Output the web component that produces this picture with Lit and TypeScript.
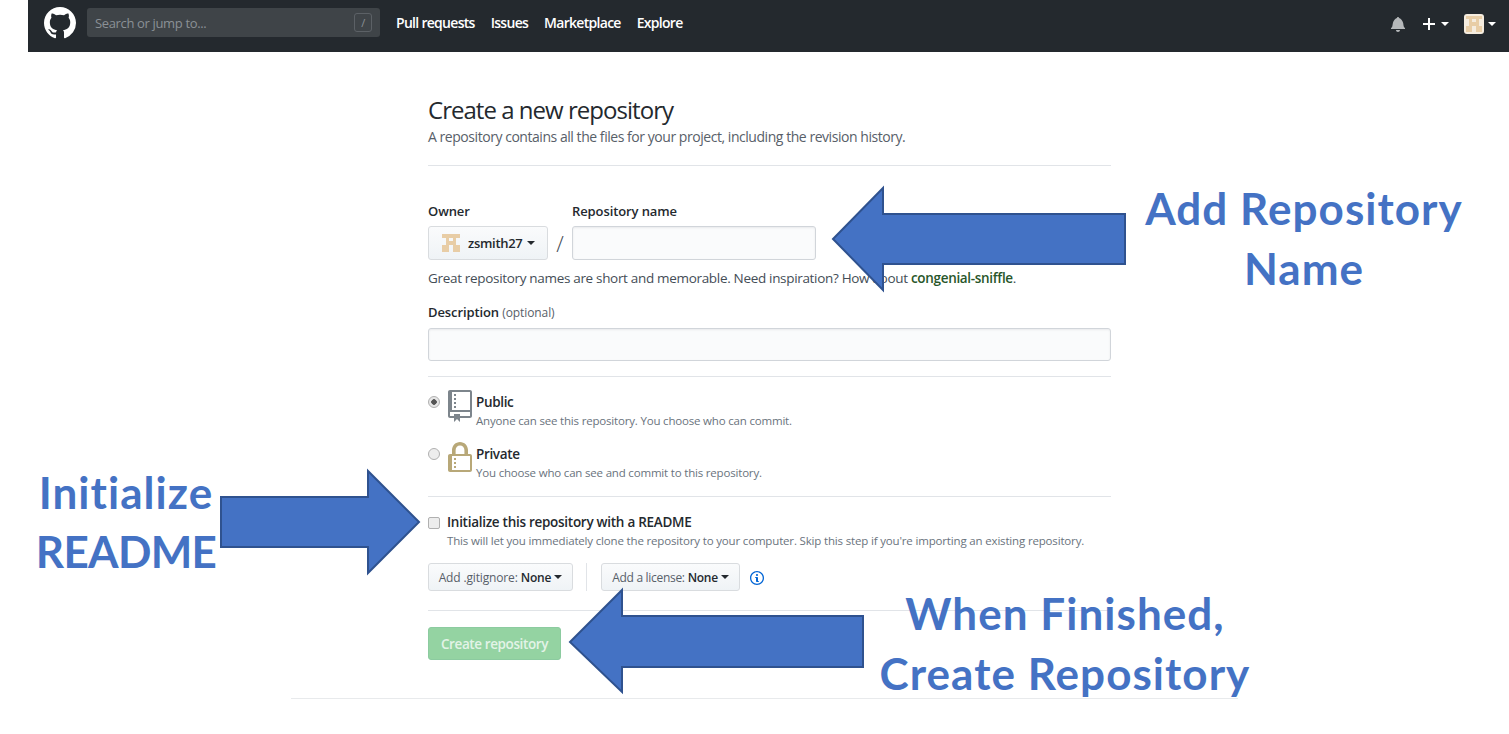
import { LitElement, html, css, svg } from 'lit'
import { customElement } from 'lit/decorators.js'

const MARK =
  'M8 0C3.58 0 0 3.58 0 8c0 3.54 2.29 6.53 5.47 7.59.4.07.55-.17.55-.38 0-.19-.01-.82-.01-1.49-2.01.37-2.53-.49-2.69-.94-.09-.23-.48-.94-.82-1.13-.28-.15-.68-.52-.01-.53.63-.01 1.08.58 1.23.82.72 1.21 1.87.87 2.33.66.07-.52.28-.87.51-1.07-1.78-.2-3.64-.89-3.64-3.95 0-.87.31-1.59.82-2.15-.08-.2-.36-1.02.08-2.12 0 0 .67-.21 2.2.82.64-.18 1.32-.27 2-.27.68 0 1.36.09 2 .27 1.53-1.04 2.2-.82 2.2-.82.44 1.1.16 1.92.08 2.12.51.56.82 1.27.82 2.15 0 3.07-1.87 3.75-3.65 3.95.29.25.54.73.54 1.48 0 1.07-.01 1.93-.01 2.2 0 .21.15.46.55.38A8.013 8.013 0 0016 8c0-4.42-3.58-8-8-8z'
const BELL =
  'M14 12v1H0v-1l.73-.58c.77-.77.81-2.55 1.19-4.42C2.69 3.23 6 2 6 2c0-.55.45-1 1-1s1 .45 1 1c0 0 3.39 1.23 4.16 5 .38 1.88.42 3.66 1.19 4.42l.66.58H14zm-7 4c1.11 0 2-.89 2-2H5c0 1.11.89 2 2 2z'
const PLUS = 'M12 9H7v5H5V9H0V7h5V2h2v5h5v2z'
const REPO =
  'M4 9H3V8h1v1zm0-3H3v1h1V6zm0-2H3v1h1V4zm0-2H3v1h1V2zm8-1v12c0 .55-.45 1-1 1H6v2l-1.5-1.5L3 16v-2H1c-.55 0-1-.45-1-1V1c0-.55.45-1 1-1h10c.55 0 1 .45 1 1zm-1 10H1v2h2v-1h3v1h5v-2zm0-10H2v9h9V1z'
const LOCK =
  'M4 13H3v-1h1v1zm8-6v7c0 .55-.45 1-1 1H1c-.55 0-1-.45-1-1V7c0-.55.45-1 1-1h1V4c0-2.2 1.8-4 4-4s4 1.8 4 4v2h1c.55 0 1 .45 1 1zM3.8 6h4.41V4c0-1.22-.98-2.2-2.2-2.2-1.22 0-2.2.98-2.2 2.2v2H3.8zM11 7H2v7h9V7zM4 8H3v1h1V8zm0 2H3v1h1v-1z'
const INFO =
  'M6.3 5.69a.942.942 0 01-.28-.7c0-.28.09-.52.28-.7.19-.18.42-.28.7-.28.28 0 .52.09.7.28.18.19.28.42.28.7 0 .28-.09.52-.28.7a1 1 0 01-.7.3c-.28 0-.52-.11-.7-.3zM8 7.99c-.02-.25-.11-.48-.31-.69-.2-.19-.42-.3-.69-.31H6c-.27.02-.48.13-.69.31-.2.2-.3.44-.31.69h1v3c.02.27.11.5.31.69.2.2.42.31.69.31h1c.27 0 .48-.11.69-.31.2-.19.3-.42.31-.69H8V7.98v.01zM7 2.3c-3.14 0-5.7 2.54-5.7 5.68 0 3.14 2.56 5.7 5.7 5.7s5.7-2.55 5.7-5.7c0-3.15-2.56-5.69-5.7-5.69v.01zM7 .98c3.86 0 7 3.14 7 7s-3.14 7-7 7-7-3.12-7-7 3.14-7 7-7z'

// 5x5 identicon, read off the reference
const IDENTICON = [
  [1, 1, 1, 1, 1],
  [0, 1, 0, 1, 0],
  [0, 1, 1, 1, 0],
  [1, 1, 0, 1, 1],
  [1, 1, 0, 1, 1],
]

const identicon = (size: number, cls: string, vb = '0 0 5 5') => html`
  <svg class=${cls} width=${size} height=${size} viewBox=${vb} shape-rendering="crispEdges">
    ${IDENTICON.flatMap((row, y) =>
      row.map((on, x) => (on ? svg`<rect x=${x} y=${y} width="1" height="1" fill="#e8cda6"></rect>` : null)),
    )}
  </svg>
`

const icon = (d: string, w: number, h: number, vw: number, vh: number, cls = '') => html`
  <svg class=${cls} width=${w} height=${h} viewBox="0 0 ${vw} ${vh}"><path fill="currentColor" fill-rule="evenodd" d=${d}></path></svg>
`

@customElement('app-root')
export class AppRoot extends LitElement {
  static styles = css`
    :host {
      display: block;
      position: relative;
      height: 734px;
      overflow: hidden;
      background: #fff;
      color: #24292e;
      font-family: 'Open Sans', 'Noto Sans', sans-serif;
      font-size: 13px;
    }
    .shell {
      margin-left: 28px;
    }
    .topbar {
      height: 52px;
      background: #24292e;
      display: flex;
      align-items: center;
      color: #fff;
      padding: 0 13px 7px 16px;
      box-sizing: border-box;
    }
    .logo {
      margin-right: 11px;
      flex: none;
    }
    .search {
      width: 293px;
      height: 29px;
      background: #3f4448;
      border-radius: 3px;
      display: flex;
      align-items: center;
      justify-content: space-between;
      padding: 0 8px;
      box-sizing: border-box;
      color: #8b9196;
      font-size: 13px;
      letter-spacing: -0.35px;
      margin-right: 16px;
    }
    .slash {
      width: 18px;
      height: 19px;
      border: 1px solid #5c6166;
      border-radius: 3px;
      box-sizing: border-box;
      display: grid;
      place-items: center;
      font-size: 11px;
      color: #8b9196;
    }
    .links {
      display: flex;
      gap: 16px;
      font-size: 14px;
      font-weight: 600;
      letter-spacing: -0.71px;
    }
    .right {
      margin-left: auto;
      margin-top: 3px;
      display: flex;
      align-items: center;
    }
    .bell {
      color: #b5b8ba;
      margin-right: 18px;
    }
    .caret {
      width: 0;
      height: 0;
      border: 4px solid transparent;
      border-top-color: currentColor;
      border-bottom-width: 0;
      display: inline-block;
    }
    .avatar-top {
      width: 20px;
      height: 20px;
      border-radius: 3px;
      background: #f5ecdf;
      margin: 0 4px 0 15px;
    }
    .plus {
      margin-right: 6px;
    }
    main {
      margin-left: 400px;
      width: 683px;
      padding-top: 42px;
    }
    h1 {
      margin: 0;
      font-size: 24px;
      font-weight: 400;
      line-height: 32px;
      letter-spacing: -0.97px;
    }
    .lead {
      margin: 1px 0 0;
      font-size: 14px;
      line-height: 20px;
      color: #586069;
      letter-spacing: -0.455px;
    }
    .head {
      padding-bottom: 18px;
      border-bottom: 1px solid #e1e4e8;
      margin-bottom: 35px;
    }
    .name-row {
      display: flex;
      align-items: flex-end;
    }
    .field-label {
      display: block;
      font-size: 13px;
      font-weight: 600;
      line-height: 20px;
      letter-spacing: -0.1px;
      margin-bottom: 5px;
    }
    .owner-btn {
      width: 120px;
      height: 34px;
      box-sizing: border-box;
      display: flex;
      align-items: center;
      gap: 6px;
      padding-left: 13px;
      border: 1px solid #d9dcdf;
      border-radius: 3px;
      background: linear-gradient(#fafbfc, #eff3f6);
      font-weight: 600;
      letter-spacing: -0.3px;
    }
    .owner-btn .caret {
      margin-left: -1px;
    }
    .id-small {
      margin-right: 2px;
    }
    .sep {
      width: 24px;
      text-align: center;
      font-size: 22px;
      line-height: 34px;
      color: #444d56;
      font-weight: 300;
    }
    .text-input {
      display: block;
      height: 34px;
      box-sizing: border-box;
      border: 1px solid #d1d5da;
      border-radius: 3px;
      background: #fafbfc;
      box-shadow: inset 0 1px 2px rgba(27, 31, 35, 0.075);
      padding: 0 8px;
      margin: 0;
      outline: none;
    }
    .repo-input {
      width: 244px;
    }
    .hint {
      margin: 8px 0 0;
      font-size: 13.5px;
      line-height: 20px;
      color: #444d56;
      letter-spacing: -0.32px;
    }
    .hint b {
      color: #28562a;
      font-weight: 600;
    }
    .desc-field {
      margin-top: 14px;
    }
    .optional {
      font-weight: 400;
      font-size: 12px;
      color: #586069;
    }
    .desc-input {
      width: 100%;
      height: 33px;
    }
    .visibility {
      margin-top: 15px;
      border-top: 1px solid #e1e4e8;
      border-bottom: 1px solid #e1e4e8;
      padding: 14px 0 13px;
      display: grid;
      gap: 12px;
    }
    .option {
      display: flex;
      align-items: flex-start;
      height: 40px;
    }
    input[type='radio'],
    input[type='checkbox'] {
      appearance: none;
      margin: 0;
      flex: none;
      box-sizing: border-box;
      width: 12px;
      height: 12px;
      border: 1px solid #b0b0b0;
      background: #ededed;
    }
    input[type='radio'] {
      border-radius: 50%;
      margin-top: 5px;
    }
    input[type='radio']:checked {
      background: radial-gradient(circle, #555 0 2.5px, #e6e6e6 3px);
    }
    input[type='checkbox'] {
      border-radius: 2px;
      margin-top: 5px;
    }
    .opt-icon {
      flex: none;
      margin: -1px 4px 0 8px;
      display: block;
    }
    .repo-ic {
      color: #7d858c;
    }
    .lock-ic {
      color: #b8a878;
    }
    .opt-title {
      font-size: 13.5px;
      font-weight: 600;
      line-height: 22px;
      letter-spacing: -0.35px;
    }
    .opt-note {
      font-size: 11.5px;
      line-height: 16px;
      color: #6a737d;
      letter-spacing: -0.185px;
    }
    .init {
      display: flex;
      align-items: flex-start;
      padding-top: 15px;
    }
    .init-body {
      margin-left: 7px;
    }
    .init-body .opt-title {
      line-height: 20px;
      letter-spacing: -0.28px;
    }
    .init-body .opt-note {
      line-height: 17px;
      letter-spacing: -0.165px;
    }
    .selects {
      display: flex;
      align-items: center;
      margin-top: 14px;
      padding-bottom: 19px;
      border-bottom: 1px solid #e1e4e8;
    }
    .select-btn {
      height: 28px;
      box-sizing: border-box;
      display: flex;
      align-items: center;
      justify-content: center;
      gap: 3px;
      border: 1px solid #d9dcdf;
      border-radius: 3px;
      background: linear-gradient(#fafbfc, #eff3f6);
      font-size: 12px;
      color: #586069;
      letter-spacing: -0.3px;
      font-weight: 500;
    }
    .select-btn b {
      color: #24292e;
      font-weight: 600;
    }
    .select-btn .caret {
      color: #24292e;
    }
    .gi {
      width: 145px;
      letter-spacing: -0.15px;
    }
    .li {
      width: 139px;
    }
    .vline {
      width: 1px;
      height: 28px;
      background: #e1e4e8;
      margin: 0 14px 0 13px;
    }
    .info {
      color: #0366d6;
      margin: 2px 0 0 10px;
    }
    .create {
      display: block;
      margin-top: 16px;
      width: 133px;
      height: 33px;
      box-sizing: border-box;
      border: 1px solid #8ccba0;
      border-radius: 3px;
      background: #94d3a2;
      color: #e3f3e7;
      font-family: inherit;
      font-size: 13.5px;
      font-weight: 600;
      letter-spacing: -0.4px;
      padding: 0;
    }
    footer {
      margin: 38px 0 0 263px;
      width: 947px;
      border-top: 1px solid #e8eaec;
    }
    .notes {
      position: absolute;
      inset: 0;
      pointer-events: none;
    }
    .arrows {
      position: absolute;
      left: 0;
      top: 0;
    }
    .arrows polygon {
      fill: #4472c4;
      stroke: #2f528f;
      stroke-width: 2;
    }
    .note {
      position: absolute;
      transform: translateX(-50%);
      text-align: center;
      white-space: nowrap;
      font-family: Lato, 'Open Sans', sans-serif;
      font-weight: 700;
      font-size: 44px;
      letter-spacing: 1.05px;
      color: #4472c4;
    }
    .caps {
      letter-spacing: -0.7px;
    }
  `

  render() {
    return html`
      <div class="shell">
        <header class="topbar">
          ${icon(MARK, 32, 32, 16, 16, 'logo')}
          <div class="search"><span>Search or jump to...</span><span class="slash">/</span></div>
          <nav class="links">
            <span>Pull requests</span><span>Issues</span><span>Marketplace</span><span>Explore</span>
          </nav>
          <div class="right">
            ${icon(BELL, 14, 16, 14, 16, 'bell')}
            ${icon(PLUS, 12, 16, 12, 16, 'plus')}
            <span class="caret"></span>
            ${identicon(20, 'avatar-top', '-0.6 -0.6 6.2 6.2')}
            <span class="caret"></span>
          </div>
        </header>
        <main>
          <div class="head">
            <h1>Create a new repository</h1>
            <p class="lead">A repository contains all the files for your project, including the revision history.</p>
          </div>
          <div class="name-row">
            <div>
              <label class="field-label">Owner</label>
              <div class="owner-btn">${identicon(18, 'id-small')} zsmith27 <span class="caret"></span></div>
            </div>
            <div class="sep">/</div>
            <div>
              <label class="field-label">Repository name</label>
              <input class="text-input repo-input" type="text" />
            </div>
          </div>
          <p class="hint">
            Great repository names are short and memorable. Need inspiration? How about <b>congenial-sniffle</b>.
          </p>
          <div class="desc-field">
            <label class="field-label">Description <span class="optional">(optional)</span></label>
            <input class="text-input desc-input" type="text" />
          </div>
          <div class="visibility">
            <div class="option">
              <input type="radio" name="vis" checked />
              ${icon(REPO, 24, 32, 12, 16, 'opt-icon repo-ic')}
              <div>
                <div class="opt-title">Public</div>
                <div class="opt-note">Anyone can see this repository. You choose who can commit.</div>
              </div>
            </div>
            <div class="option">
              <input type="radio" name="vis" />
              ${icon(LOCK, 24, 32, 12, 16, 'opt-icon lock-ic')}
              <div>
                <div class="opt-title">Private</div>
                <div class="opt-note">You choose who can see and commit to this repository.</div>
              </div>
            </div>
          </div>
          <div class="init">
            <input type="checkbox" />
            <div class="init-body">
              <div class="opt-title">Initialize this repository with a README</div>
              <div class="opt-note">
                This will let you immediately clone the repository to your computer. Skip this step if you're importing an existing repository.
              </div>
            </div>
          </div>
          <div class="selects">
            <div class="select-btn gi">Add .gitignore: <b>None</b> <span class="caret"></span></div>
            <div class="vline"></div>
            <div class="select-btn li">Add a license: <b>None</b> <span class="caret"></span></div>
            ${icon(INFO, 14, 16, 14, 16, 'info')}
          </div>
          <button class="create">Create repository</button>
        </main>
        <footer></footer>
      </div>
      <div class="notes">
        <svg class="arrows" width="1509" height="734">
          <polygon points="833,239 883,188 883,214 1125,214 1125,264 883,264 883,290"></polygon>
          <polygon points="419,522 368,471 368,497 221,497 221,547 368,547 368,573"></polygon>
          <polygon points="570,642 622,590 622,616 863,616 863,667 622,667 622,692"></polygon>
        </svg>
        <div class="note" style="left:1304px;top:178px;line-height:60px">Add Repository<br />Name</div>
        <div class="note" style="left:126px;top:463px;line-height:59px">Initialize<br /><span class="caps">README</span></div>
        <div class="note" style="left:1065px;top:583px;line-height:60px">When Finished,<br />Create Repository</div>
      </div>
    `
  }
}
